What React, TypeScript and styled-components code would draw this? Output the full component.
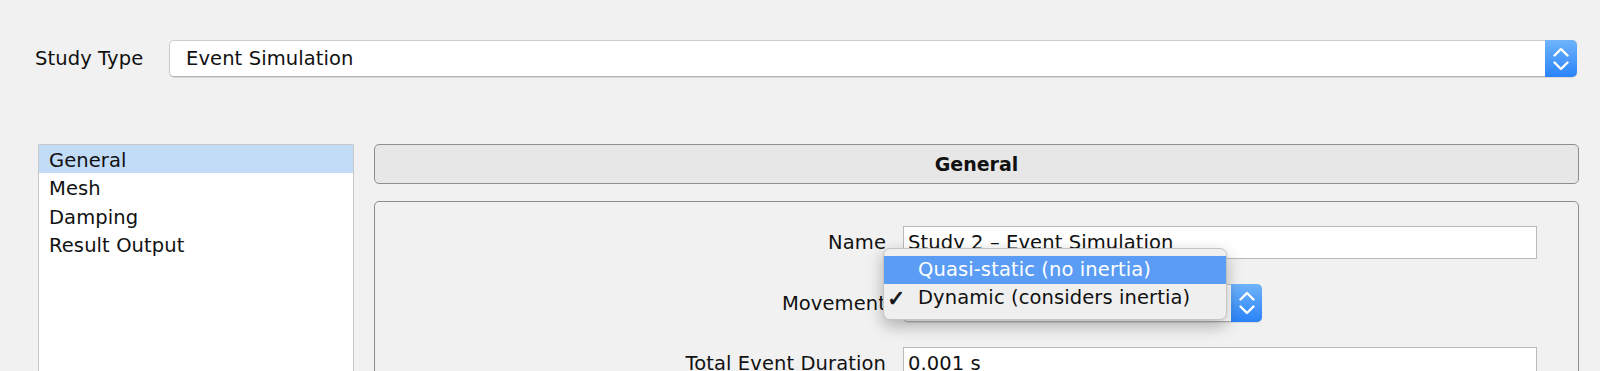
import React from 'react';
import styled, { createGlobalStyle } from 'styled-components';

const Global = createGlobalStyle`
  html, body { margin: 0; padding: 0; background: #f1f1f1; }
  body {
    font-family: "DejaVu Sans", Verdana, sans-serif;
    font-size: 19.5px;
    letter-spacing: 0.1px;
    color: #111;
  }
`;

const Page = styled.div`
  width: 1600px;
  height: 371px;
  overflow: hidden;
  box-sizing: border-box;
  padding-top: 40px;
  background: #f1f1f1;
`;

const TopRow = styled.div`
  display: flex;
  align-items: center;
  padding: 0 23px 0 35px;
`;

const TopLabel = styled.div`
  width: 134px;
  flex: none;
`;

const Combo = styled.div<{ $width?: number }>`
  flex: ${p => (p.$width ? 'none' : '1')};
  width: ${p => (p.$width ? `${p.$width}px` : 'auto')};
  height: ${p => (p.$width ? 38 : 37)}px;
  box-sizing: border-box;
  display: flex;
  align-items: stretch;
  background: #fff;
  border: 1px solid #cdcdcd;
  border-bottom-color: #b3b3b3;
  border-radius: 5px;
  box-shadow: 0 1px 1px rgba(0, 0, 0, 0.1);
`;

const ComboText = styled.div`
  flex: 1;
  display: flex;
  align-items: center;
  padding-left: 16px;
  white-space: nowrap;
  overflow: hidden;
`;

const Stepper = styled.div<{ $w: number }>`
  flex: none;
  width: ${p => p.$w}px;
  margin: -1px -1px -1px 0;
  border-radius: 0 5px 5px 0;
  background: linear-gradient(#6fb4fb, #2a83f8);
  display: flex;
  align-items: center;
  justify-content: center;
`;

const MainRow = styled.div`
  display: flex;
  gap: 20px;
  padding: 0 21px 0 38px;
  margin-top: 67px;
`;

const List = styled.div`
  width: 316px;
  height: 260px;
  flex: none;
  box-sizing: border-box;
  border: 1px solid #c8c8c8;
  background: #fff;
`;

const ListItem = styled.div<{ $selected?: boolean }>`
  height: 26.4px;
  padding-top: 2px;
  line-height: 28.4px;
  padding-left: 10px;
  background: ${p => (p.$selected ? '#c2dbf7' : 'transparent')};
  white-space: nowrap;
`;

const RightCol = styled.div`
  flex: 1;
  display: flex;
  flex-direction: column;
  gap: 17px;
`;

const Header = styled.div`
  height: 40px;
  box-sizing: border-box;
  border: 1px solid #8e8e8e;
  border-radius: 5px;
  background: #e7e7e7;
  font-weight: bold;
  font-size: 19px;
  letter-spacing: 0;
  text-align: center;
  line-height: 39px;
`;

const Panel = styled.div`
  height: 240px;
  box-sizing: border-box;
  border: 1px solid #8e8e8e;
  border-radius: 5px;
  padding: 24px 41px 0 0;
  display: grid;
  grid-template-columns: 1fr 634px;
  column-gap: 17px;
  row-gap: 25px;
  align-items: center;
  align-content: start;
`;

const FieldLabel = styled.div`
  text-align: right;
  white-space: nowrap;
`;

const TextField = styled.div`
  height: 33px;
  box-sizing: border-box;
  border: 1px solid #bababa;
  background: #fff;
  padding-left: 4px;
  line-height: 31px;
  white-space: nowrap;
`;

const ComboCell = styled.div`
  position: relative;
`;

const Popup = styled.div`
  position: absolute;
  left: -20px;
  top: -36px;
  width: 344px;
  height: 72px;
  box-sizing: border-box;
  padding-top: 7px;
  background: #efefef;
  border: 1px solid #c4c4c4;
  border-radius: 7px;
  box-shadow: 0 6px 16px rgba(0, 0, 0, 0.28);
  z-index: 2;
`;

const PopupItem = styled.div<{ $active?: boolean }>`
  position: relative;
  height: 27.5px;
  line-height: 27.5px;
  padding-left: 34px;
  white-space: nowrap;
  color: ${p => (p.$active ? '#fff' : '#111')};
  background: ${p => (p.$active ? '#5b9cf5' : 'transparent')};
`;

const Check = styled.span`
  position: absolute;
  left: 3px;
  top: 1px;
  font-size: 22px;
  -webkit-text-stroke: 0.7px #111;
`;

const Chevrons: React.FC = () => (
  <svg width="16" height="24" viewBox="0 0 16 24" fill="none">
    <polyline points="1.5,8.5 8,2 14.5,8.5" stroke="#fff" strokeWidth="2.4" strokeLinecap="round" strokeLinejoin="round" />
    <polyline points="1.5,15.5 8,22 14.5,15.5" stroke="#fff" strokeWidth="2.4" strokeLinecap="round" strokeLinejoin="round" />
  </svg>
);

export default function App() {
  return (
    <>
      <Global />
      <Page>
        <TopRow>
          <TopLabel>Study Type</TopLabel>
          <Combo>
            <ComboText>Event Simulation</ComboText>
            <Stepper $w={32}>
              <Chevrons />
            </Stepper>
          </Combo>
        </TopRow>
        <MainRow>
          <List>
            <ListItem $selected>General</ListItem>
            <ListItem>Mesh</ListItem>
            <ListItem>Damping</ListItem>
            <ListItem>Result Output</ListItem>
          </List>
          <RightCol>
            <Header>General</Header>
            <Panel>
              <FieldLabel>Name</FieldLabel>
              <TextField>Study 2 – Event Simulation</TextField>
              <FieldLabel>Movement</FieldLabel>
              <ComboCell>
                <Combo $width={359}>
                  <ComboText />
                  <Stepper $w={31}>
                    <Chevrons />
                  </Stepper>
                </Combo>
                <Popup>
                  <PopupItem $active>Quasi-static (no inertia)</PopupItem>
                  <PopupItem>
                    <Check>✓</Check>
                    Dynamic (considers inertia)
                  </PopupItem>
                </Popup>
              </ComboCell>
              <FieldLabel>Total Event Duration</FieldLabel>
              <TextField>0.001 s</TextField>
            </Panel>
          </RightCol>
        </MainRow>
      </Page>
    </>
  );
}
